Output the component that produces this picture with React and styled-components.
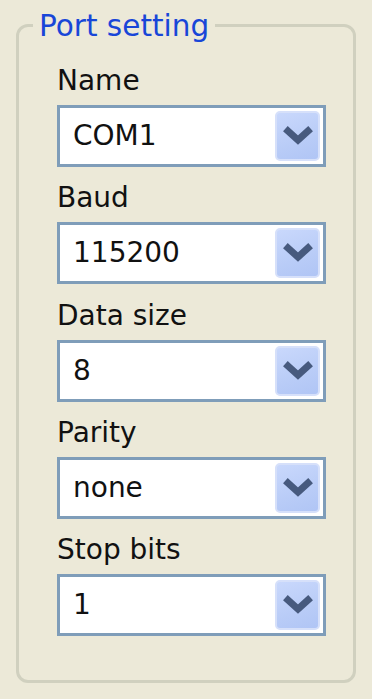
import React from "react";
import styled, { createGlobalStyle } from "styled-components";

const Global = createGlobalStyle`
  html, body {
    margin: 0;
    padding: 0;
    background: #ece9d8;
  }
  body {
    font-family: "DejaVu Sans", Verdana, sans-serif;
  }
`;

const Page = styled.div`
  padding: 8px 16px 16px 16px;
  min-height: 699px;
  box-sizing: border-box;
  background: #ece9d8;
`;

const GroupBox = styled.fieldset`
  box-sizing: border-box;
  width: 340px;
  margin: 0;
  padding: 22px 27px 44px 38px;
  border: 3px solid #d0d0bf;
  border-radius: 12px;
  display: flex;
  flex-direction: column;
  gap: 14.25px;
`;

const Legend = styled.legend`
  margin-left: -24px;
  padding: 3px 6px 0 6px;
  font-size: 29.5px;
  line-height: 31px;
  color: #1846d8;
`;

const Field = styled.div`
  display: flex;
  flex-direction: column;
  gap: 7px;
`;

const Label = styled.label`
  font-size: 28px;
  line-height: 34px;
  color: #111;
`;

const Combo = styled.div`
  box-sizing: border-box;
  width: 269px;
  height: 62px;
  border: 3px solid #7f9db9;
  background: #fff;
  display: flex;
  align-items: center;
  padding: 3px 3px 3px 13px;
`;

const Value = styled.span`
  flex: 1;
  font-size: 28px;
  line-height: 34px;
  color: #111;
`;

const DropButton = styled.div`
  box-sizing: border-box;
  width: 45px;
  height: 100%;
  border: 2px solid #d6e0fa;
  border-radius: 5px;
  background: linear-gradient(160deg, #c9d8fc 0%, #b9ccf7 60%, #b0c5f5 100%);
  display: flex;
  align-items: center;
  justify-content: center;
`;

const Chevron = () => (
  <svg width="30" height="20" viewBox="0 0 30 20">
    <polyline
      points="5,5 15,14 25,5"
      fill="none"
      stroke="#475a7e"
      strokeWidth="7"
      strokeLinecap="square"
      strokeLinejoin="miter"
    />
  </svg>
);

const fields = [
  { label: "Name", value: "COM1" },
  { label: "Baud", value: "115200" },
  { label: "Data size", value: "8" },
  { label: "Parity", value: "none" },
  { label: "Stop bits", value: "1" },
];

export default function App() {
  return (
    <>
      <Global />
      <Page>
        <GroupBox>
          <Legend>Port setting</Legend>
          {fields.map((f) => (
            <Field key={f.label}>
              <Label>{f.label}</Label>
              <Combo>
                <Value>{f.value}</Value>
                <DropButton>
                  <Chevron />
                </DropButton>
              </Combo>
            </Field>
          ))}
        </GroupBox>
      </Page>
    </>
  );
}
